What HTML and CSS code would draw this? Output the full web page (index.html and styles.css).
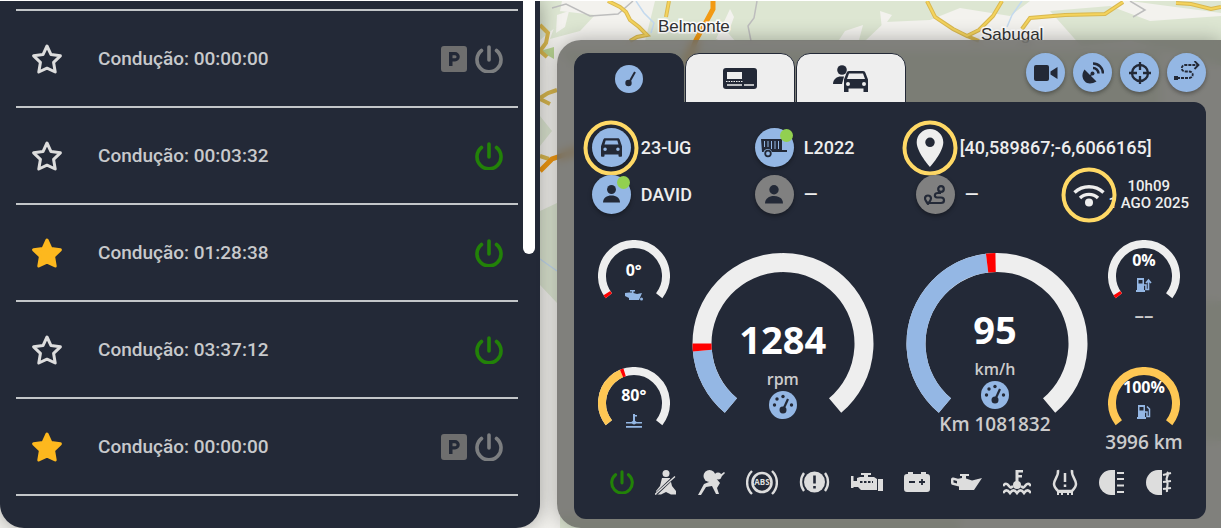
FILE: index.html
```
<!DOCTYPE html>
<html lang="pt">
<head>
    <meta charset="utf-8">
    <title>Frota</title>
    <link rel="stylesheet" href="styles.css">
</head>
<body>
<svg class="sprite" aria-hidden="true">
    <symbol id="star" viewBox="0 0 32 32"><path d="M16 3l4 8.600 9.400 1.200-6.800 6.600 1.600 9.600L16 25.200 7.800 29l1.600-9.600-6.800-6.600 9.400-1.200z" stroke-width="3" stroke-linejoin="round" stroke="currentColor"/></symbol>
    <symbol id="power" viewBox="0 0 28 28"><path d="M6.500 5.500a12 12 0 1 0 15 0M14 2v13" fill="none" stroke="currentColor" stroke-width="3.600" stroke-linecap="round"/></symbol>
    <symbol id="parking" viewBox="0 0 26 26"><path fill-rule="evenodd" fill="currentColor" d="M3 0h20a3 3 0 0 1 3 3v20a3 3 0 0 1-3 3H3a3 3 0 0 1-3-3V3a3 3 0 0 1 3-3zM8 6v14h3.500v-4.500H14a4.750 4.750 0 0 0 0-9.500zm3.500 3.200H14a1.550 1.550 0 0 1 0 3.100h-2.500z"/></symbol>
    <symbol id="needle" viewBox="0 0 28 28"><circle cx="14" cy="14" r="14" fill="#94b7e4"/><path d="M13.500 18.500L20 7" stroke="#232937" stroke-width="2"/><circle cx="13.500" cy="18" r="3.200" fill="#232937"/></symbol>
    <symbol id="gauge" viewBox="0 0 28 28"><circle cx="14" cy="14" r="14" fill="#94b7e4"/><g fill="#232937"><circle cx="14" cy="5.500" r="1.700"/><circle cx="8" cy="8" r="1.700"/><circle cx="5.500" cy="14" r="1.700"/><circle cx="22.500" cy="14" r="1.700"/><circle cx="14" cy="19" r="3.500"/></g><path d="M14 19l5-11" stroke="#232937" stroke-width="2.200"/></symbol>
    <symbol id="tacho" viewBox="0 0 34 21"><rect width="34" height="21" rx="3" fill="#232937"/><rect x="4" y="4" width="15" height="7" fill="#eee"/><path d="M3 13.500h17" stroke="#eee" stroke-width="1.200" stroke-dasharray="1.500 1"/><path d="M4 17h15M21 17h10" stroke="#eee" stroke-width="1.500"/></symbol>
    <symbol id="car" viewBox="3 5 18 16"><path fill-rule="evenodd" d="M18.920 6.010C18.720 5.420 18.160 5 17.500 5h-11c-.66 0-1.210.42-1.420 1.010L3 12v8c0 .55.45 1 1 1h1c.55 0 1-.45 1-1v-1h12v1c0 .55.45 1 1 1h1c.55 0 1-.45 1-1v-8zM6.500 16a1.500 1.500 0 1 1 0-3 1.500 1.500 0 0 1 0 3zm11 0a1.500 1.500 0 1 1 0-3 1.500 1.500 0 0 1 0 3zM6 10.500l1-3.500h10l1 3.500z"/></symbol>
    <symbol id="driver-car" viewBox="0 0 36 28"><circle cx="9" cy="5" r="4.800"/><path d="M0 19c0-5 4-7.500 8-7.500h3L9 19z"/><path fill-rule="evenodd" d="M16 6h14c1.500 0 2 .8 2.500 2l2.500 6.500V27h-4.500v-3.500h-15V27H11V14.500L13.500 8c.5-1.200 1-2 2.500-2zm0 2.500L14 14h18l-2-5.500zM15 17a2 2 0 1 0 0 4 2 2 0 0 0 0-4zm16 0a2 2 0 1 0 0 4 2 2 0 0 0 0-4z"/></symbol>
    <symbol id="video" viewBox="0 0 24 16"><rect width="15" height="16" rx="2"/><path d="M16.500 6.500L23.500 2v12l-7-4.500z"/></symbol>
    <symbol id="dish" viewBox="0 0 22 22"><path d="M2.500 7.500l12 12C10 22 5.500 22.500 2.500 19S0 11 2.500 7.500z"/><circle cx="10.500" cy="11.500" r="2"/><path d="M11 6a5.500 5.500 0 0 1 5.500 5.500M11 1.500a10 10 0 0 1 10 10" fill="none" stroke="currentColor" stroke-width="2.500"/><path d="M7 15l3.500-3.500" stroke="currentColor" stroke-width="1.500"/></symbol>
    <symbol id="target" viewBox="0 0 22 22"><g fill="none" stroke="currentColor" stroke-width="2.300"><circle cx="11" cy="11" r="8"/><path d="M11 0v8M11 14v8M0 11h8M14 11h8"/></g></symbol>
    <symbol id="path" viewBox="0 0 26 24"><g fill="none" stroke="currentColor" stroke-width="1.800"><path d="M3 17h12c5 0 5-6.500 0-6.500h-3.500c-5 0-5-6.500 0-6.500H24" stroke-dasharray="3 1"/><path d="M20.500 0l4 4-4 4"/></g><path d="M0 15h4v4H0z"/></symbol>
    <symbol id="trailer" viewBox="0 0 26 20"><path fill-rule="evenodd" d="M0 1h21v11h5v2H11a4.500 4.500 0 0 0-8.500 0H1zM3 3v6h1V3zm3.500 0v6h1V3zM10 3v8h1V3zm3.500 0v8h1V3zM17 3v8h1V3z"/><circle cx="7" cy="15.500" r="2.800" fill="none" stroke="currentColor" stroke-width="1.800"/></symbol>
    <symbol id="person" viewBox="0 0 18 20"><circle cx="9" cy="4.700" r="4.700"/><path d="M0 18.500c0-5 4-7.500 9-7.500s9 2.500 9 7.500z"/></symbol>
    <symbol id="pin" viewBox="5 2 14 20"><path d="M12 2C8.130 2 5 5.130 5 9c0 5.250 7 13 7 13s7-7.750 7-13c0-3.870-3.130-7-7-7zm0 9.500a2.500 2.500 0 1 1 0-5 2.500 2.500 0 0 1 0 5z"/></symbol>
    <symbol id="route" viewBox="0 0 22 20"><g fill="none" stroke="currentColor" stroke-width="2.200"><path d="M5 18h12c4 0 4-5.500 0-5.500h-4c-3 0-3-4.500 1-4.500h3"/><circle cx="17" cy="4" r="2.800"/><path d="M4 19c-2-3-3-4-3-5.500a3 3 0 0 1 6 0C7 15 6 16 4 19z"/></g></symbol>
    <symbol id="wifi" viewBox="0 0 32 24"><g fill="none" stroke="currentColor" stroke-width="3.400"><path d="M1.500 9.500a21 21 0 0 1 29 0M7 15a13 13 0 0 1 18 0"/></g><circle cx="16" cy="19.500" r="4"/></symbol>
    <symbol id="oil" viewBox="0 0 31 18"><path fill-rule="evenodd" d="M9 1h9v2h-3v2.500l6 2L31 5l-8 12H8v-3.500L2 12a2 2 0 0 1-2-2V6.500C0 5 1 4.500 2.500 4.500L7 5.800l4-.8V3H9zM2.500 7v2.500L6 10.500V8z"/></symbol>
    <symbol id="oil-drop" viewBox="0 0 18 11"><path d="M5 0h5v1.500H8.500V3L12 4l5-1-3 7H4V8L0 6V3l4-.5h3V1.500H5z"/><circle cx="16.500" cy="9" r="1.500"/></symbol>
    <symbol id="coolant" viewBox="0 0 28 26"><path d="M12.500 1h3v15h-3zM15 1h5v2.500h-5zM15 6h4v2.500h-4z"/><circle cx="14" cy="16" r="4"/><path d="M0 17c2-3 4-3 6 0s3 1 4 0M28 17c-2-3-4-3-6 0s-3 1-4 0M0 24c2.500-3.500 4.500-3.500 7 0 2.500-3.500 4.500-3.500 7 0 2.500-3.500 4.500-3.500 7 0 2.500-3.500 4.500-3.500 7 0" fill="none" stroke="currentColor" stroke-width="2.600"/></symbol>
    <symbol id="coolant-small" viewBox="0 0 16 14"><path d="M7 0h2v8H7zM9 1h2v1.500H9zM0 8h5l3-1 3 1h5v1.500H0zM0 12h16v1.800H0z"/><circle cx="8" cy="8.500" r="2"/></symbol>
    <symbol id="pump" viewBox="0 0 15 14"><path fill-rule="evenodd" d="M1 0h7v12h1v2H0v-2h1zM2.500 2v3.500h4V2z"/><path d="M8 7h2v4.500h2.500V4L10 1.500" fill="none" stroke="currentColor" stroke-width="1.500"/></symbol>
    <symbol id="pump-out" viewBox="0 0 16 14"><path fill-rule="evenodd" d="M1 0h7v12h1v2H0v-2h1zM2.500 2v3.500h4V2z"/><path d="M8 7h2v4.500h2.500V3M10 5l2.500-3L15 5" fill="none" stroke="currentColor" stroke-width="1.600"/></symbol>
    <symbol id="belt" viewBox="0 0 22 25"><circle cx="11" cy="3.500" r="3.500"/><path d="M7 8h8l2 8 4 5v3.500h-5L11 22l-5 2.500H1V21l4-5z"/><path d="M1 24L20 6" stroke="#232937" stroke-width="3"/><path d="M0 24.500L20 6.500" stroke="currentColor" stroke-width="1.400"/></symbol>
    <symbol id="airbag" viewBox="0 0 27 25"><circle cx="11.500" cy="6" r="6"/><circle cx="20" cy="6" r="3.500"/><path d="M22 5l4-3 1 1-4 4zM11 12l6-5 5 6-3 5 2 6h-3l-4-8-6 1-5 8H0l6-11z"/></symbol>
    <symbol id="brake" viewBox="0 0 31 22"><path d="M5 2a15 15 0 0 0 0 18M26 2a15 15 0 0 1 0 18" fill="none" stroke="currentColor" stroke-width="2.400"/><circle cx="15.500" cy="11" r="10.500"/><path d="M15.500 4.500v8M15.500 15v2.500" stroke="#232937" stroke-width="2.600"/></symbol>
    <symbol id="engine" viewBox="0 0 32 20"><path d="M10 1h10v2h-3v2h6l3 2v11H10l-3-3H2.500v1H0V4h2.500v5H6V6l3-1h4V3h-3zM27 7h5v12h-5z"/><path d="M9 10h13" stroke="#232937" stroke-width="2" stroke-dasharray="2.500 1.500"/></symbol>
    <symbol id="battery" viewBox="0 0 26 20"><path d="M4 0h5v2h8V0h5v2h1a3 3 0 0 1 3 3v12a3 3 0 0 1-3 3H3a3 3 0 0 1-3-3V5a3 3 0 0 1 3-3h1z"/><path d="M5 10h6M15 10h6M18 7v6" stroke="#232937" stroke-width="1.800"/></symbol>
    <symbol id="tyre" viewBox="0 0 26 26"><path d="M6 1c1 6-4 9-4 14 0 3 2 5 4 7h14c2-2 4-4 4-7 0-5-5-8-4-14" fill="none" stroke="currentColor" stroke-width="2.500"/><path d="M5 22h16v4h-2v-2h-2v2h-2v-2h-4v2H9v-2H7v2H5z"/><path d="M13 4v9M13 15.500V18" stroke="currentColor" stroke-width="2.500"/></symbol>
    <symbol id="light" viewBox="0 0 26 25"><path d="M12 0h4v25h-4a12 12.500 0 0 1 0-25z"/><path d="M18 3h7M18 9h7M18 15.500h7M18 22h7" stroke="currentColor" stroke-width="2.200"/></symbol>
    <symbol id="fog" viewBox="0 0 26 25"><path d="M12 0h4v25h-4a12 12.500 0 0 1 0-25z"/><path d="M17 5l8-2M17 12l8-1M17 19l8-1M21 2c3 3-2 5 0 9s-1 6 0 11" stroke="currentColor" stroke-width="2.200" fill="none"/></symbol>
    <path id="arc-big" d="M38.900 152.600A81 81 0 1 1 143.100 152.600" pathLength="280"/>
    <path id="arc-small" d="M10.800 55.700A32 32 0 1 1 61.200 55.700" pathLength="256"/>
</svg>

<svg class="map" viewBox="0 0 1221 528" preserveAspectRatio="xMinYMin slice" aria-hidden="true">
    <rect width="1221" height="528" fill="#f3f2ee"/>
    <g fill="#dde6d2">
        <path d="M540 0h22l-5 25-17 14zM560 10l35 4-15 16-30 8zM655 0h95l5 16-40 24h-70zM700 0h330l-20 15-50-8-30 12-45 2-20 19H735zM1050 10l60-5 40 15 71-5v50l-90-25-50 5zM1130 0h91v12z"/>
        <path d="M540 115l12 15-12 15zM540 210l17-8v100l-17-18zM560 50h600v60H620zM1200 300h21v140h-21zM560 515h400v13H560z"/>
    </g>
    <path d="M540 50l14 8v-12z" fill="#b9d493"/>
    <g fill="#f3f2ee"><path d="M557 14l12-4-4 16-9 6zM730 8l-14 30h10l8-22zM845 30l18-6-4 15h-20zM880 10l12 4-10 14z"/></g>
    <g fill="none" stroke="#bdbdbd" stroke-width="1.500"><path d="M552 7l14-4 24 12 28-2 15-13M757 0l-3 17-6 8 3 15M1130 0l15 9-12 7"/></g>
    <path d="M636 0l8 12 10 10-3 10M1022 0l-10 14-5 12M540 258l17 12" fill="none" stroke="#c3d9ee" stroke-width="1.500"/>
    <g fill="none" stroke="#d9b850" stroke-width="4"><path d="M608 0l12 6 6 5 4 8 9 7 8 8-10 2-7 4M669 0l-3 16M927 0l8 16 18 12 14 7 12-6 14-14 9-15M967 35l12 5M1022 28l8-11 35-3 40-1 18-12M1176 2l15 1 20 5 10-2M540 24l8 8-2 10-6 8 7 6M540 97l8-5 9-3M540 98l10 5M540 155l9 3"/></g>
    <g fill="none" stroke="#f4d35c" stroke-width="2"><path d="M608 0l12 6 6 5 4 8 9 7 8 8-10 2-7 4M669 0l-3 16M927 0l8 16 18 12 14 7 12-6 14-14 9-15M1022 28l8-11 35-3 40-1 18-12M1176 2l15 1 20 5 10-2"/></g>
    <path d="M713 0v8l-7 13-10 18-10 25M540 170l12-12 30-10" fill="none" stroke="#f29a13" stroke-width="5"/>
    <g class="town"><text x="658" y="31">Belmonte</text><text x="981" y="39">Sabugal</text></g>
</svg>

<div class="app">
    <section class="trips">
        <ul class="trip-list">
            <li class="trip"><button class="star" aria-label="Favorito"><svg><use href="#star"/></svg></button><span class="trip-name">Condução: 00:00:00</span><svg class="trip-park"><use href="#parking"/></svg><svg class="trip-power"><use href="#power"/></svg></li>
            <li class="trip"><button class="star" aria-label="Favorito"><svg><use href="#star"/></svg></button><span class="trip-name">Condução: 00:03:32</span><svg class="trip-power on"><use href="#power"/></svg></li>
            <li class="trip"><button class="star active" aria-label="Favorito"><svg><use href="#star"/></svg></button><span class="trip-name">Condução: 01:28:38</span><svg class="trip-power on"><use href="#power"/></svg></li>
            <li class="trip"><button class="star" aria-label="Favorito"><svg><use href="#star"/></svg></button><span class="trip-name">Condução: 03:37:12</span><svg class="trip-power on"><use href="#power"/></svg></li>
            <li class="trip"><button class="star active" aria-label="Favorito"><svg><use href="#star"/></svg></button><span class="trip-name">Condução: 00:00:00</span><svg class="trip-park"><use href="#parking"/></svg><svg class="trip-power"><use href="#power"/></svg></li>
        </ul>
        <div class="scroll-thumb"></div>
    </section>

    <section class="dash">
        <header class="dash-top">
            <nav class="tabs">
                <button class="tab active" aria-label="Painel"><svg width="28" height="28"><use href="#needle"/></svg></button>
                <button class="tab" aria-label="Tacógrafo"><svg width="34" height="21"><use href="#tacho"/></svg></button>
                <button class="tab" aria-label="Condutor"><svg width="36" height="28"><use href="#driver-car"/></svg></button>
            </nav>
            <div class="actions">
                <button class="round" aria-label="Vídeo"><svg width="24" height="16"><use href="#video"/></svg></button>
                <button class="round" aria-label="Satélite"><svg width="22" height="22"><use href="#dish"/></svg></button>
                <button class="round" aria-label="Centrar"><svg width="22" height="22"><use href="#target"/></svg></button>
                <button class="round" aria-label="Percurso"><svg width="26" height="24"><use href="#path"/></svg></button>
            </div>
        </header>

        <div class="dash-body">
            <div class="info">
                <div class="item"><span class="round ring"><svg width="21" height="19"><use href="#car"/></svg></span>23-UG</div>
                <div class="item"><span class="round dot"><svg width="26" height="20"><use href="#trailer"/></svg></span>L2022</div>
                <div class="item wide"><span class="pin ring"><svg width="28" height="38"><use href="#pin"/></svg></span>[40,589867;-6,6066165]</div>
                <div class="item"><span class="round dot"><svg width="17" height="19"><use href="#person"/></svg></span>DAVID</div>
                <div class="item"><span class="round off"><svg width="18" height="20"><use href="#person"/></svg></span>—</div>
                <div class="item"><span class="round off"><svg width="22" height="20"><use href="#route"/></svg></span>—</div>
                <div class="item signal"><span class="wifi ring"><svg width="32" height="24"><use href="#wifi"/></svg></span><time class="clock">10h09<br>1 AGO 2025</time></div>
            </div>

            <div class="gauges">
                <div class="side">
                    <div class="gauge small">
                        <svg class="dial" viewBox="0 0 72 62"><use href="#arc-small"/><use href="#arc-small" class="mark" stroke-dasharray="6 300"/></svg>
                        <div class="reading low"><b>0°</b><svg width="18" height="11"><use href="#oil-drop"/></svg></div>
                    </div>
                    <div class="gauge small">
                        <svg class="dial" viewBox="0 0 72 62"><use href="#arc-small"/><use href="#arc-small" class="warm" stroke-dasharray="105 300"/><use href="#arc-small" class="mark" stroke-dasharray="6 300" stroke-dashoffset="-105"/></svg>
                        <div class="reading mid"><b>80°</b><svg width="16" height="14"><use href="#coolant-small"/></svg></div>
                    </div>
                </div>
                <div class="gauge big">
                    <svg class="dial" viewBox="0 0 182 162"><use href="#arc-big"/><use href="#arc-big" class="fill" stroke-dasharray="45 300"/><use href="#arc-big" class="mark" stroke-dasharray="5 300" stroke-dashoffset="-45"/></svg>
                    <div class="reading rpm"><b>1284</b><span class="unit">rpm</span><svg width="28" height="28"><use href="#gauge"/></svg></div>
                </div>
                <div class="gauge big">
                    <svg class="dial" viewBox="0 0 182 162"><use href="#arc-big"/><use href="#arc-big" class="fill" stroke-dasharray="133 300"/><use href="#arc-big" class="mark" stroke-dasharray="6 300" stroke-dashoffset="-133"/></svg>
                    <div class="reading speed"><b>95</b><span class="unit">km/h</span><svg width="28" height="28"><use href="#gauge"/></svg><span class="total">Km 1081832</span></div>
                </div>
                <div class="side">
                    <div class="gauge small">
                        <svg class="dial" viewBox="0 0 72 62"><use href="#arc-small"/><use href="#arc-small" class="mark" stroke-dasharray="6 300"/></svg>
                        <div class="reading fuel"><b>0%</b><svg width="16" height="14"><use href="#pump-out"/></svg><span class="total">––</span></div>
                    </div>
                    <div class="gauge small">
                        <svg class="dial" viewBox="0 0 72 62"><use href="#arc-small" class="warm"/></svg>
                        <div class="reading fuel"><b>100%</b><svg width="15" height="14"><use href="#pump"/></svg><span class="total">3996 km</span></div>
                    </div>
                </div>
            </div>

            <div class="warnings">
                <svg class="on" width="24" height="24"><use href="#power"/></svg>
                <svg width="22" height="25"><use href="#belt"/></svg>
                <svg width="27" height="25"><use href="#airbag"/></svg>
                <svg width="32" height="25" viewBox="0 0 32 25"><g fill="none" stroke="currentColor"><circle cx="16" cy="12.500" r="9.500" stroke-width="2.600"/><path d="M6 1a16 16 0 0 0 0 23M26 1a16 16 0 0 1 0 23" stroke-width="2.400"/></g><text x="16" y="15" text-anchor="middle" class="abs-text">ABS</text></svg>
                <svg width="31" height="22"><use href="#brake"/></svg>
                <svg width="32" height="20"><use href="#engine"/></svg>
                <svg width="26" height="20"><use href="#battery"/></svg>
                <svg width="31" height="18"><use href="#oil"/></svg>
                <svg width="28" height="26"><use href="#coolant"/></svg>
                <svg width="26" height="26"><use href="#tyre"/></svg>
                <svg width="26" height="25"><use href="#light"/></svg>
                <svg width="26" height="25"><use href="#fog"/></svg>
            </div>
        </div>
    </section>
</div>
</body>
</html>
```
FILE: styles.css
```
*,
*::before,
*::after {
    box-sizing: border-box;
}
body {
    margin: 0;
    padding-top: 1px;
    background: #fff;
    font-family: Roboto, sans-serif;
    font-weight: 500;
    color: #eee;
}
button {
    padding: 0;
    border: 0;
    background: none;
    color: inherit;
    font: inherit;
    cursor: pointer;
}
svg {
    display: block;
    flex: none;
    fill: currentColor;
}
.sprite {
    position: absolute;
    width: 0;
    height: 0;
}
.map {
    position: absolute;
    top: 1px;
    left: 0;
    width: 100%;
    height: calc(100% - 1px);
    z-index: -1;
}
.town {
    font: 17px "Liberation Sans", sans-serif;
    fill: #333;
    stroke: #fff;
    stroke-width: 3px;
    paint-order: stroke;
}
.app {
    display: grid;
    grid-template-columns: 13fr 16fr;
    gap: 17px;
    overflow: hidden;
}

/* trip list */
.trips {
    position: relative;
    padding: 8px 22px 32px 16px;
    background: #232937;
    border-radius: 0 0 24px 24px;
    box-shadow: 0 0 20px rgba(0, 0, 0, .35);
}
.trip-list {
    margin: 0;
    padding: 0;
    list-style: none;
    border-top: 2px solid #c3c6c9;
}
.trip {
    display: flex;
    align-items: center;
    height: 97px;
    padding: 0 15px;
    border-bottom: 2px solid #c3c6c9;
}
.star {
    color: #ddd;
}
.star svg {
    width: 32px;
    height: 32px;
    fill: none;
}
.star.active {
    color: #fdb81e;
}
.star.active svg {
    fill: currentColor;
}
.trip-name {
    flex: 1;
    padding-left: 35px;
    font-size: 19px;
    color: #c8c9cc;
}
.trip-park {
    width: 26px;
    height: 26px;
    margin-right: 8px;
    color: #6e6e6e;
}
.trip-power {
    width: 28px;
    height: 28px;
    color: #7c7e80;
}
.on {
    color: #228208;
}
.scroll-thumb {
    position: absolute;
    top: 0;
    right: 5px;
    width: 12px;
    height: 253px;
    background: #fff;
    border-radius: 0 0 6px 6px;
}

/* dashboard */
.dash {
    display: flex;
    flex-direction: column;
    margin-top: 39px;
    padding: 13px 15px 9px 17px;
    background: rgba(90, 90, 86, .75);
    border-radius: 24px 0 0 24px;
    box-shadow: 0 0 20px rgba(0, 0, 0, .3);
    backdrop-filter: blur(5px);
}
.dash-top {
    display: flex;
    justify-content: space-between;
}
.tabs {
    display: flex;
    gap: 1px;
}
.tab {
    display: flex;
    align-items: center;
    justify-content: center;
    width: 110px;
    height: 51px;
    background: #eee;
    color: #232937;
    border: 1px solid #232937;
    border-radius: 14px 14px 0 0;
}
.tab.active {
    background: #232937;
}
.actions {
    display: flex;
    gap: 8px;
}
.round {
    position: relative;
    display: flex;
    flex: none;
    align-items: center;
    justify-content: center;
    width: 39px;
    height: 39px;
    background: #94b7e4;
    color: #232937;
    border-radius: 50%;
    box-shadow: 0 2px 4px rgba(0, 0, 0, .35);
}
.round.off {
    background: #808080;
}
.dot::after {
    content: "";
    position: absolute;
    top: 1px;
    right: 1px;
    width: 13px;
    height: 13px;
    background: #92d050;
    border-radius: 50%;
}
.ring {
    position: relative;
}
.ring::before {
    content: "";
    position: absolute;
    top: 50%;
    left: 50%;
    width: 55px;
    height: 55px;
    border: 4px solid #ffd966;
    border-radius: 50%;
    transform: translate(-50%, -50%);
}
.dash-body {
    flex: 1;
    margin-top: -2px;
    background: #232937;
    border-radius: 0 12px 12px 12px;
}
.info {
    display: grid;
    grid-template-columns: 163px 161px 1fr auto;
    grid-auto-rows: 47px;
    padding: 22px 17px 0 18px;
}
.item {
    display: flex;
    align-items: center;
    gap: 10px;
    font-size: 18px;
    white-space: nowrap;
}
.wide {
    grid-column: span 2;
    gap: 16px;
}
.signal {
    gap: 4px;
}
.clock {
    font-size: 15px;
    line-height: 17px;
    text-align: center;
}
.gauges {
    display: grid;
    grid-template-columns: 84px 1fr 1fr 80px;
    padding: 22px 22px 0 18px;
    font-family: "Open Sans", sans-serif;
}
.gauge {
    display: grid;
    justify-items: center;
    align-items: start;
}
.dial,
.reading {
    grid-area: 1 / 1;
}
.dial {
    fill: none;
    stroke: #eee;
    stroke-width: 8px;
}
.big {
    padding-top: 13px;
}
.big .dial {
    width: 182px;
    stroke-width: 19px;
}
.small {
    height: 127px;
}
.small .dial {
    width: 72px;
}
.fill {
    stroke: #94b7e4;
}
.warm {
    stroke: #fec754;
}
.mark {
    stroke: #f00;
}
.reading {
    display: flex;
    flex-direction: column;
    align-items: center;
    color: #94b7e4;
    white-space: nowrap;
}
.reading b {
    font-size: 16px;
    line-height: 20px;
    color: #fff;
}
.big b {
    font-size: 38px;
    line-height: 44px;
}
.low {
    padding-top: 20px;
    gap: 10px;
}
.mid {
    padding-top: 18px;
    gap: 9px;
}
.fuel {
    padding-top: 10px;
    gap: 8px;
}
.rpm {
    padding-top: 64px;
}
.speed {
    padding: 54px 4px 0 0;
}
.unit {
    margin: 8px 0 2px;
    font-size: 16px;
    font-weight: 600;
    line-height: 20px;
    color: #ccc;
}
.total {
    font-size: 19px;
    font-weight: 600;
    line-height: 30px;
    color: #ccc;
}
.warnings {
    display: flex;
    align-items: center;
    justify-content: space-between;
    height: 26px;
    margin: -25px 34px 24px 36px;
    color: #ddd;
}
.warnings .on {
    color: #228208;
}
.abs-text {
    font: 700 8px "Open Sans", sans-serif;
}
```
